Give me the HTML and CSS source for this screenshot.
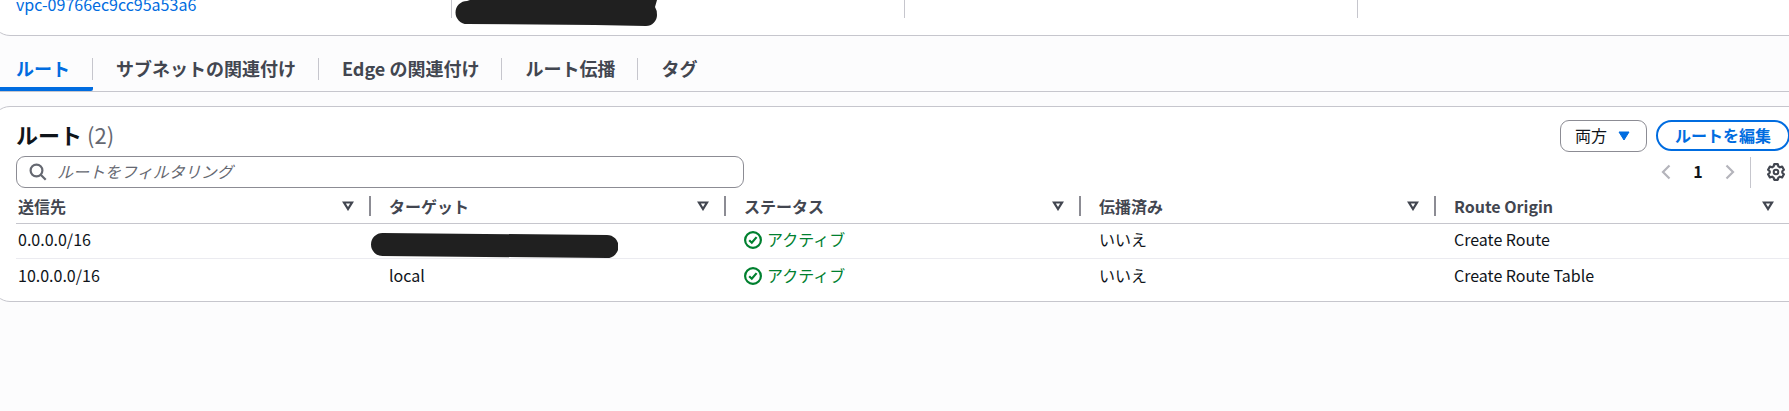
FILE: index.html
```
<!DOCTYPE html>
<html lang="ja">
<head>
<meta charset="utf-8">
<title>ルートテーブル</title>
<link rel="stylesheet" href="styles.css">
</head>
<body>
<svg class="sprite" aria-hidden="true">
  <symbol id="sort" viewBox="0 0 12 10"><path d="M2 1.5h8L6 8z" fill="none" stroke="currentColor" stroke-width="2.2" stroke-linejoin="miter"/></symbol>
  <symbol id="ok" viewBox="0 0 18 18"><circle cx="9" cy="9" r="7.9" fill="none" stroke="currentColor" stroke-width="2.2"/><path d="M5.2 9.2l2.6 2.5 4.8-5.6" fill="none" stroke="currentColor" stroke-width="2.2"/></symbol>
</svg>
<main class="page">
  <section class="card details">
    <div class="detail"><a class="link" href="#vpc">vpc-09766ec9cc95a53a6</a></div>
    <div class="detail">
      <svg class="owner-mask" viewBox="0 0 202 26" aria-hidden="true"><path d="M15 0H202L200 7Q202 10 202 15A11 11 0 0 1 191 26L140 25 12 24A11.500 11.500 0 0 1 12 1Z" fill="#202020"/></svg>
    </div>
    <div class="detail"></div>
    <div class="detail"></div>
  </section>

  <div class="tabs" role="tablist">
    <button class="tab active" role="tab" aria-selected="true"><span>ルート</span></button>
    <button class="tab" role="tab"><span>サブネットの関連付け</span></button>
    <button class="tab" role="tab"><span>Edge の関連付け</span></button>
    <button class="tab" role="tab"><span>ルート伝播</span></button>
    <button class="tab" role="tab"><span>タグ</span></button>
  </div>

  <section class="card routes">
    <header class="head">
      <h2 class="title">ルート <span class="count">(2)</span></h2>
      <div class="actions">
        <div class="select-wrap">
          <select class="select" aria-label="表示するルート"><option>両方</option></select>
          <svg class="caret" viewBox="0 0 12 10" aria-hidden="true"><path d="M1 1h10L6 9z" fill="#006ce0" stroke="#006ce0" stroke-linejoin="round"/></svg>
        </div>
        <button class="edit">ルートを編集</button>
      </div>
    </header>
    <div class="tools">
      <label class="search">
        <svg class="search-icon" viewBox="0 0 18 18" aria-hidden="true"><circle cx="7.5" cy="7.5" r="5.9" fill="none" stroke="currentColor" stroke-width="2.2"/><path d="M11.7 11.7l5 5" stroke="currentColor" stroke-width="2.2"/></svg>
        <input class="filter" type="text" placeholder="ルートをフィルタリング" aria-label="ルートをフィルタリング">
      </label>
      <div class="pager">
        <button class="arrow" aria-label="前のページ"><svg viewBox="0 0 10 16"><path d="M8.5 1.5L2 8l6.500 6.500" fill="none" stroke="currentColor" stroke-width="2.2"/></svg></button>
        <button class="number">1</button>
        <button class="arrow" aria-label="次のページ"><svg viewBox="0 0 10 16"><path d="M1.500 1.500L8 8l-6.500 6.500" fill="none" stroke="currentColor" stroke-width="2.2"/></svg></button>
        <button class="gear" aria-label="設定"><svg viewBox="0 0 18 18"><path d="M7.200 1.200h3.600l.6 2.200 1.500.9 2.200-.7 1.800 3.100-1.600 1.500v1.600l1.600 1.500-1.800 3.100-2.200-.7-1.500.9-.6 2.200H7.200l-.6-2.200-1.500-.9-2.200.7-1.800-3.100 1.600-1.500V8.200L1.100 6.700l1.800-3.100 2.200.7 1.500-.9z" fill="none" stroke="currentColor" stroke-width="2.200" stroke-linejoin="round"/><circle cx="9" cy="9" r="2.300" fill="none" stroke="currentColor" stroke-width="2"/></svg></button>
      </div>
    </div>
    <table class="table">
      <thead>
        <tr>
          <th><div class="th">送信先<svg class="sort"><use href="#sort"/></svg></div></th>
          <th><div class="th">ターゲット<svg class="sort"><use href="#sort"/></svg></div></th>
          <th><div class="th">ステータス<svg class="sort"><use href="#sort"/></svg></div></th>
          <th><div class="th">伝播済み<svg class="sort"><use href="#sort"/></svg></div></th>
          <th><div class="th">Route Origin<svg class="sort"><use href="#sort"/></svg></div></th>
        </tr>
      </thead>
      <tbody>
        <tr>
          <td>0.0.0.0/16</td>
          <td class="masked"><svg class="target-mask" viewBox="0 0 247 25" aria-hidden="true"><path d="M11.500 0L236 2A11.500 11.500 0 0 1 236 25L11.500 23A11.500 11.500 0 0 1 11.500 0Z" fill="#202020"/></svg></td>
          <td><span class="status"><svg class="ok"><use href="#ok"/></svg>アクティブ</span></td>
          <td>いいえ</td>
          <td>Create Route</td>
        </tr>
        <tr>
          <td>10.0.0.0/16</td>
          <td>local</td>
          <td><span class="status"><svg class="ok"><use href="#ok"/></svg>アクティブ</span></td>
          <td>いいえ</td>
          <td>Create Route Table</td>
        </tr>
      </tbody>
    </table>
  </section>
</main>
</body>
</html>
```
FILE: styles.css
```
* { box-sizing: border-box; }
html, body { height: 100%; }
body {
  margin: 0;
  overflow: hidden;
  background: #fcfcfd;
  color: #0f141a;
  font: 16px/20px "Noto Sans CJK JP", sans-serif;
}
button, input, select { font: inherit; color: inherit; margin: 0; }
button { padding: 0; border: 0; background: none; cursor: pointer; }
svg { display: block; }
.sprite { position: absolute; width: 0; height: 0; }

.page { margin: 0 -26px 0 -8px; }
.card {
  background: #fff;
  border: 1px solid #c6c6cd;
  border-radius: 18px;
  padding: 0 23px;
}

.details {
  display: grid;
  grid-template-columns: repeat(4, 1fr);
  gap: 37px;
  margin-top: -21px;
  padding-top: 14px;
  padding-bottom: 17px;
}
.detail { height: 24px; }
.detail + .detail {
  margin-left: -18px;
  padding-left: 3px;
  border-left: 1px solid #c6c6cd;
}
.link { color: #006ce0; text-decoration: none; }
.owner-mask { width: 202px; height: 26px; margin-top: 6px; }

.tabs {
  display: flex;
  height: 56px;
  padding-left: 8px;
  border-bottom: 1px solid #c6c6cd;
}
.tab {
  display: flex;
  align-items: center;
  padding-top: 14px;
  color: #424650;
  font-size: 18px;
  font-weight: 700;
  border-bottom: 4px solid transparent;
}
.tab span {
  height: 22px;
  line-height: 20px;
  padding: 0 22px 0 23px;
  border-right: 1px solid #c6c6cd;
}
.tab:first-child span { padding-left: 16px; }
.tab:last-child span { border-right: 0; }
.tab.active { color: #006ce0; border-bottom-color: #006ce0; border-bottom-right-radius: 2px; }

.routes { margin-top: 14px; padding-top: 13px; padding-bottom: 7px; }
.head, .tools, .actions, .pager { display: flex; align-items: center; }
.head, .tools { justify-content: space-between; }
.head, .actions { align-items: flex-start; }
.head { margin-bottom: 4px; }
.title { margin: 0; font-size: 22px; line-height: 28px; }
.count { color: #656871; font-weight: 400; }
.actions { gap: 9px; padding-right: 1px; }
.select-wrap { position: relative; }
.select {
  display: block;
  appearance: none;
  width: 87px;
  height: 32px;
  padding: 0 14px 2px;
  border: 1px solid #8c8c94;
  border-radius: 9px;
  background: #fff;
}
.caret { position: absolute; right: 17px; top: 11px; width: 12px; height: 10px; pointer-events: none; }
.edit {
  height: 31px;
  padding: 0 17px 2px;
  border: 2px solid #006ce0;
  border-radius: 20px;
  background: #fff;
  color: #006ce0;
  font-weight: 700;
}

.search {
  display: flex;
  align-items: center;
  gap: 10px;
  width: 41%;
  min-width: 240px;
  height: 32px;
  padding: 0 12px;
  border: 1px solid #8c8c94;
  border-radius: 9px;
  color: #656871;
}
.search-icon { width: 18px; height: 18px; flex: none; }
.filter { flex: 1; min-width: 0; padding: 0 0 2px; border: 0; outline: 0; background: none; }
.filter::placeholder { color: #656871; font-style: italic; opacity: 1; }
.arrow { color: #b4b4bb; }
.arrow svg { width: 10px; height: 16px; }
.number { width: 54px; padding-bottom: 2px; font-weight: 700; }
.gear {
  height: 31px;
  margin-left: 15px;
  padding: 0 6px 0 16px;
  border-left: 1px solid #c6c6cd;
  color: #424650;
}
.gear svg { width: 18px; height: 18px; }

.table { width: 100%; table-layout: fixed; border-collapse: separate; border-spacing: 0; }
th, td { padding: 0 0 0 18px; text-align: left; font-weight: 400; }
th:first-child, td:first-child { padding-left: 2px; }
th { height: 36px; border-bottom: 1px solid #c6c6cd; }
td { height: 35px; padding-bottom: 4px; }
tbody tr:first-child td { border-bottom: 1px solid #ebebf0; }
.th {
  display: flex;
  align-items: center;
  justify-content: space-between;
  padding-right: 15px;
  border-right: 2px solid #8c8c94;
  color: #424650;
  font-weight: 700;
}
th:last-child .th { border-right-color: transparent; }
.sort { width: 12px; height: 10px; }
.status { display: flex; align-items: flex-start; gap: 5px; color: #00802f; }
.ok { width: 18px; height: 18px; margin-top: 2px; }
.masked { position: relative; }
.target-mask { position: absolute; left: 0; top: 9px; width: 247px; height: 25px; }
```
